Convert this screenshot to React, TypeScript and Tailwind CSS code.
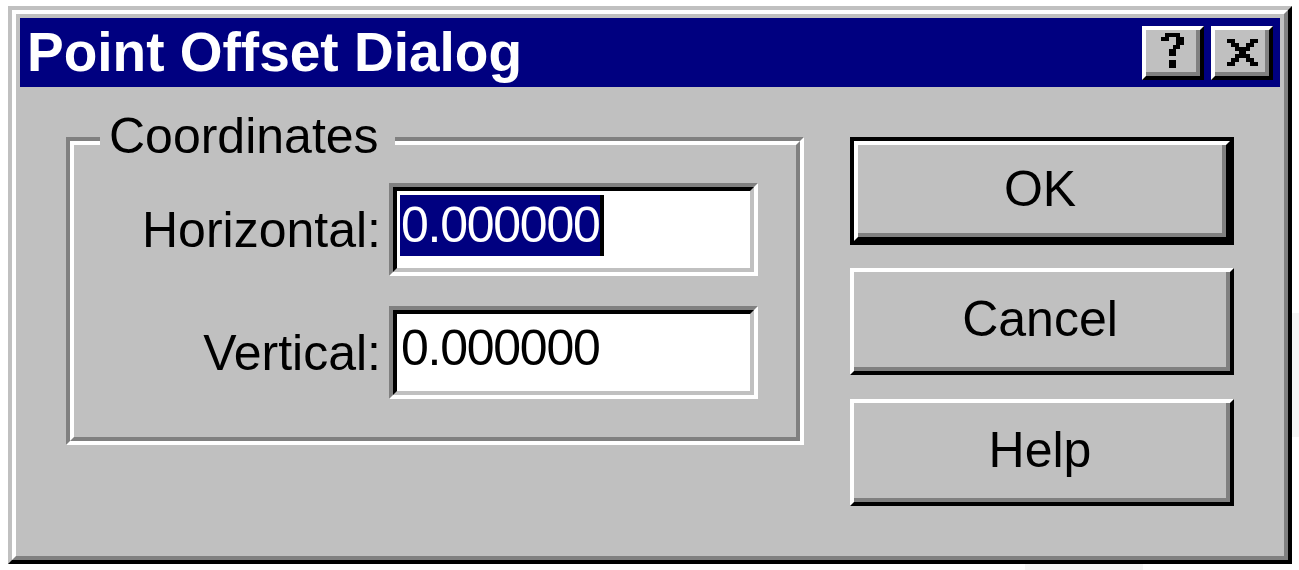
import React from "react";

const font = { fontFamily: '"Liberation Sans", Arial, sans-serif' };

// Win95 caption glyphs, drawn on their pixel grid
const HELP_ROWS = [".####.", "##..##", "....##", "...##.", "..##..", "..##..", "......", "..##..", "..##.."];
const CLOSE_ROWS = ["##....##", ".##..##.", "..####..", "...##...", "..####..", ".##..##.", "##....##"];

function Glyph({ rows, w, h }: { rows: string[]; w: number; h: number }) {
  return (
    <svg width={w} height={h} viewBox={`0 0 ${rows[0].length} ${rows.length}`} shapeRendering="crispEdges">
      {rows.map((r, y) =>
        r.split("").map((c, x) => (c === "#" ? <rect key={`${x}-${y}`} x={x} y={y} width={1} height={1} fill="#000" /> : null))
      )}
    </svg>
  );
}

function CaptionButton({ children, className }: { children: React.ReactNode; className?: string }) {
  return (
    <div className={"w-[62px] h-[54px] border-4 border-t-white border-l-white border-b-black border-r-black " + (className ?? "")}>
      <div className="w-full h-full bg-[#c0c0c0] border-b-4 border-r-4 border-b-[#808080] border-r-[#808080]">{children}</div>
    </div>
  );
}

function PushButton({ label, isDefault, className }: { label: string; isDefault?: boolean; className: string }) {
  const face = (
    <div className="w-full h-full border-4 border-t-white border-l-white border-b-black border-r-black">
      <div className="w-full h-full bg-[#c0c0c0] border-b-4 border-r-4 border-b-[#808080] border-r-[#808080] flex items-center justify-center pb-[1px]">
        <span className="text-[50px] leading-[56px] text-black">{label}</span>
      </div>
    </div>
  );
  if (isDefault) return <div className={"border-4 border-black " + className}>{face}</div>;
  return <div className={className}>{face}</div>;
}

function Field({ label, value, selected }: { label: string; value: string; selected?: boolean }) {
  return (
    <div className="flex items-center justify-end pr-[38px]">
      <span className="text-[50px] leading-[56px] text-black mr-[8px]">{label}</span>
      <div className="w-[369px] h-[93px] border-4 border-t-[#808080] border-l-[#808080] border-b-white border-r-white">
        <div className="w-full h-full bg-white border-4 border-t-black border-l-black border-b-[#c0c0c0] border-r-[#c0c0c0] pl-[3px] pt-[4px]">
          {selected ? (
            <span className="inline-block h-[61px] bg-[#000080] text-white text-[50px] leading-[61px] tracking-[-1.25px] pl-[1px] border-r-4 border-black">{value}</span>
          ) : (
            <span className="inline-block h-[61px] text-black text-[50px] leading-[61px] tracking-[-1.25px] pl-[1px]">{value}</span>
          )}
        </div>
      </div>
    </div>
  );
}

export default function App() {
  return (
    <div className="w-[1299px] h-[570px] bg-white flex flex-col overflow-hidden" style={font}>
      <div className="flex pt-[6px] pl-[8px]">
        {/* window frame */}
        <div className="w-[1284px] h-[558px] border-4 border-t-[#c0c0c0] border-l-[#c0c0c0] border-b-black border-r-black">
          <div className="w-full h-full border-4 border-t-white border-l-white border-b-[#808080] border-r-[#808080] bg-[#c0c0c0] p-[4px] flex flex-col">
            {/* title bar */}
            <div className="h-[69px] bg-[#000080] flex items-center pl-[7px] pr-[7px]">
              <span className="flex-1 text-white font-bold text-[55px] leading-none">Point Offset Dialog</span>
              <CaptionButton>
                <div className="pl-[15px] pt-[3px]">
                  <Glyph rows={HELP_ROWS} w={23} h={35} />
                </div>
              </CaptionButton>
              <CaptionButton className="ml-[7px]">
                <div className="pl-[12px] pt-[9px]">
                  <Glyph rows={CLOSE_ROWS} w={31} h={27} />
                </div>
              </CaptionButton>
            </div>

            {/* body */}
            <div className="flex pt-[50px] pl-[46px]">
              <div className="relative w-[738px] h-[308px] border-4 border-t-[#808080] border-l-[#808080] border-b-white border-r-white">
                <div className="w-full h-full border-4 border-t-white border-l-white border-b-[#808080] border-r-[#808080] flex flex-col pt-[38px] gap-[30px]">
                  <Field label="Horizontal:" value="0.000000" selected />
                  <Field label="Vertical:" value="0.000000" />
                </div>
                <span className="absolute left-[30px] top-[-33px] w-[295px] pl-[9px] bg-[#c0c0c0] text-black text-[50px] leading-[56px]">Coordinates</span>
              </div>

              <div className="ml-[46px] w-[384px] flex flex-col">
                <PushButton label="OK" isDefault className="h-[108px]" />
                <PushButton label="Cancel" className="h-[107px] mt-[23px]" />
                <PushButton label="Help" className="h-[107px] mt-[24px]" />
              </div>
            </div>
          </div>
        </div>
        <div className="w-[7px] pt-[307px]">
          <div className="h-[124px] bg-[#f4f4f4]" />
        </div>
      </div>
      <div className="h-[6px] flex">
        <div className="ml-[1025px] w-[118px] bg-[#f4f4f4]" />
      </div>
    </div>
  );
}
